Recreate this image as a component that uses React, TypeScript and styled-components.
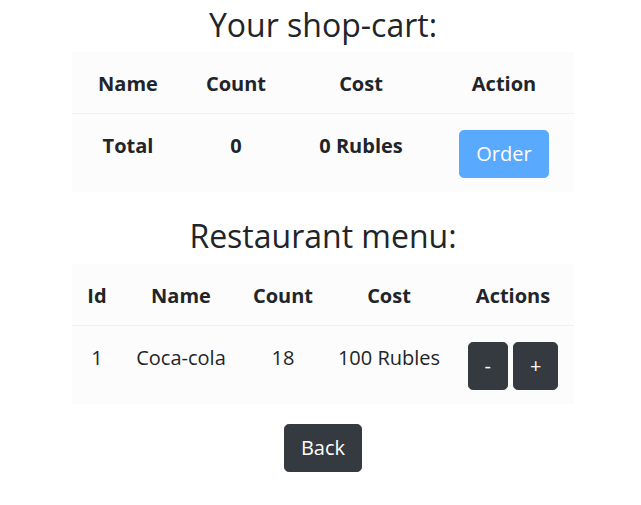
import React from "react";
import styled, { createGlobalStyle } from "styled-components";

const Global = createGlobalStyle`
  html, body { margin: 0; padding: 0; background: #fff; }
  body {
    font-family: "Open Sans", "Noto Sans", sans-serif;
    color: #212529;
    font-size: 16px;
    line-height: 1.5;
  }
`;

const Page = styled.div`
  display: flex;
  flex-direction: column;
  align-items: center;
  padding: 3px 0 0 5px;
`;

const Heading = styled.h2`
  margin: 0 0 8px;
  padding-top: 3px;
  font-size: 32px;
  font-weight: 400;
  line-height: 1.2;
`;

const Table = styled.div<{ $after: number }>`
  width: 502px;
  background: #fcfcfc;
  margin-bottom: ${(p) => p.$after}px;
  font-size: 20px;
  line-height: 30px;
`;

const Row = styled.div<{ $cols: string; $divider?: boolean }>`
  display: grid;
  grid-template-columns: ${(p) => p.$cols};
  border-top: ${(p) => (p.$divider ? "1px solid #f1f1f1" : "none")};
`;

const Cell = styled.div<{ $bold?: boolean }>`
  padding: 17px 0 14px;
  text-align: center;
  font-weight: ${(p) => (p.$bold ? 700 : 400)};
  display: flex;
  justify-content: center;
  align-items: flex-start;
  gap: 5px;
`;

const ButtonCell = styled(Cell)`
  padding: 16px 0 14px;
`;

const Button = styled.button<{ $variant: "primary" | "dark" }>`
  font-family: inherit;
  font-size: 20px;
  line-height: 30px;
  padding: 8px 16px;
  border-radius: 4.8px;
  border: 1px solid ${(p) => (p.$variant === "primary" ? "#59a9ff" : "#343a40")};
  background: ${(p) => (p.$variant === "primary" ? "#59a9ff" : "#343a40")};
  color: #fff;
  cursor: pointer;
`;

const CART_COLS = "112px 104px 146px 140px";
const MENU_COLS = "50px 118px 86px 126px 122px";

export default function App() {
  return (
    <>
      <Global />
      <Page>
        <Heading>Your shop-cart:</Heading>
        <Table $after={22}>
          <Row $cols={CART_COLS}>
            <Cell $bold>Name</Cell>
            <Cell $bold>Count</Cell>
            <Cell $bold>Cost</Cell>
            <Cell $bold>Action</Cell>
          </Row>
          <Row $cols={CART_COLS} $divider>
            <Cell $bold>Total</Cell>
            <Cell $bold>0</Cell>
            <Cell $bold>0 Rubles</Cell>
            <ButtonCell>
              <Button $variant="primary">Order</Button>
            </ButtonCell>
          </Row>
        </Table>
        <Heading>Restaurant menu:</Heading>
        <Table $after={20}>
          <Row $cols={MENU_COLS}>
            <Cell $bold>Id</Cell>
            <Cell $bold>Name</Cell>
            <Cell $bold>Count</Cell>
            <Cell $bold>Cost</Cell>
            <Cell $bold>Actions</Cell>
          </Row>
          <Row $cols={MENU_COLS} $divider>
            <Cell>1</Cell>
            <Cell>Coca-cola</Cell>
            <Cell>18</Cell>
            <Cell>100 Rubles</Cell>
            <ButtonCell>
              <Button $variant="dark">-</Button>
              <Button $variant="dark">+</Button>
            </ButtonCell>
          </Row>
        </Table>
        <Button $variant="dark">Back</Button>
      </Page>
    </>
  );
}
